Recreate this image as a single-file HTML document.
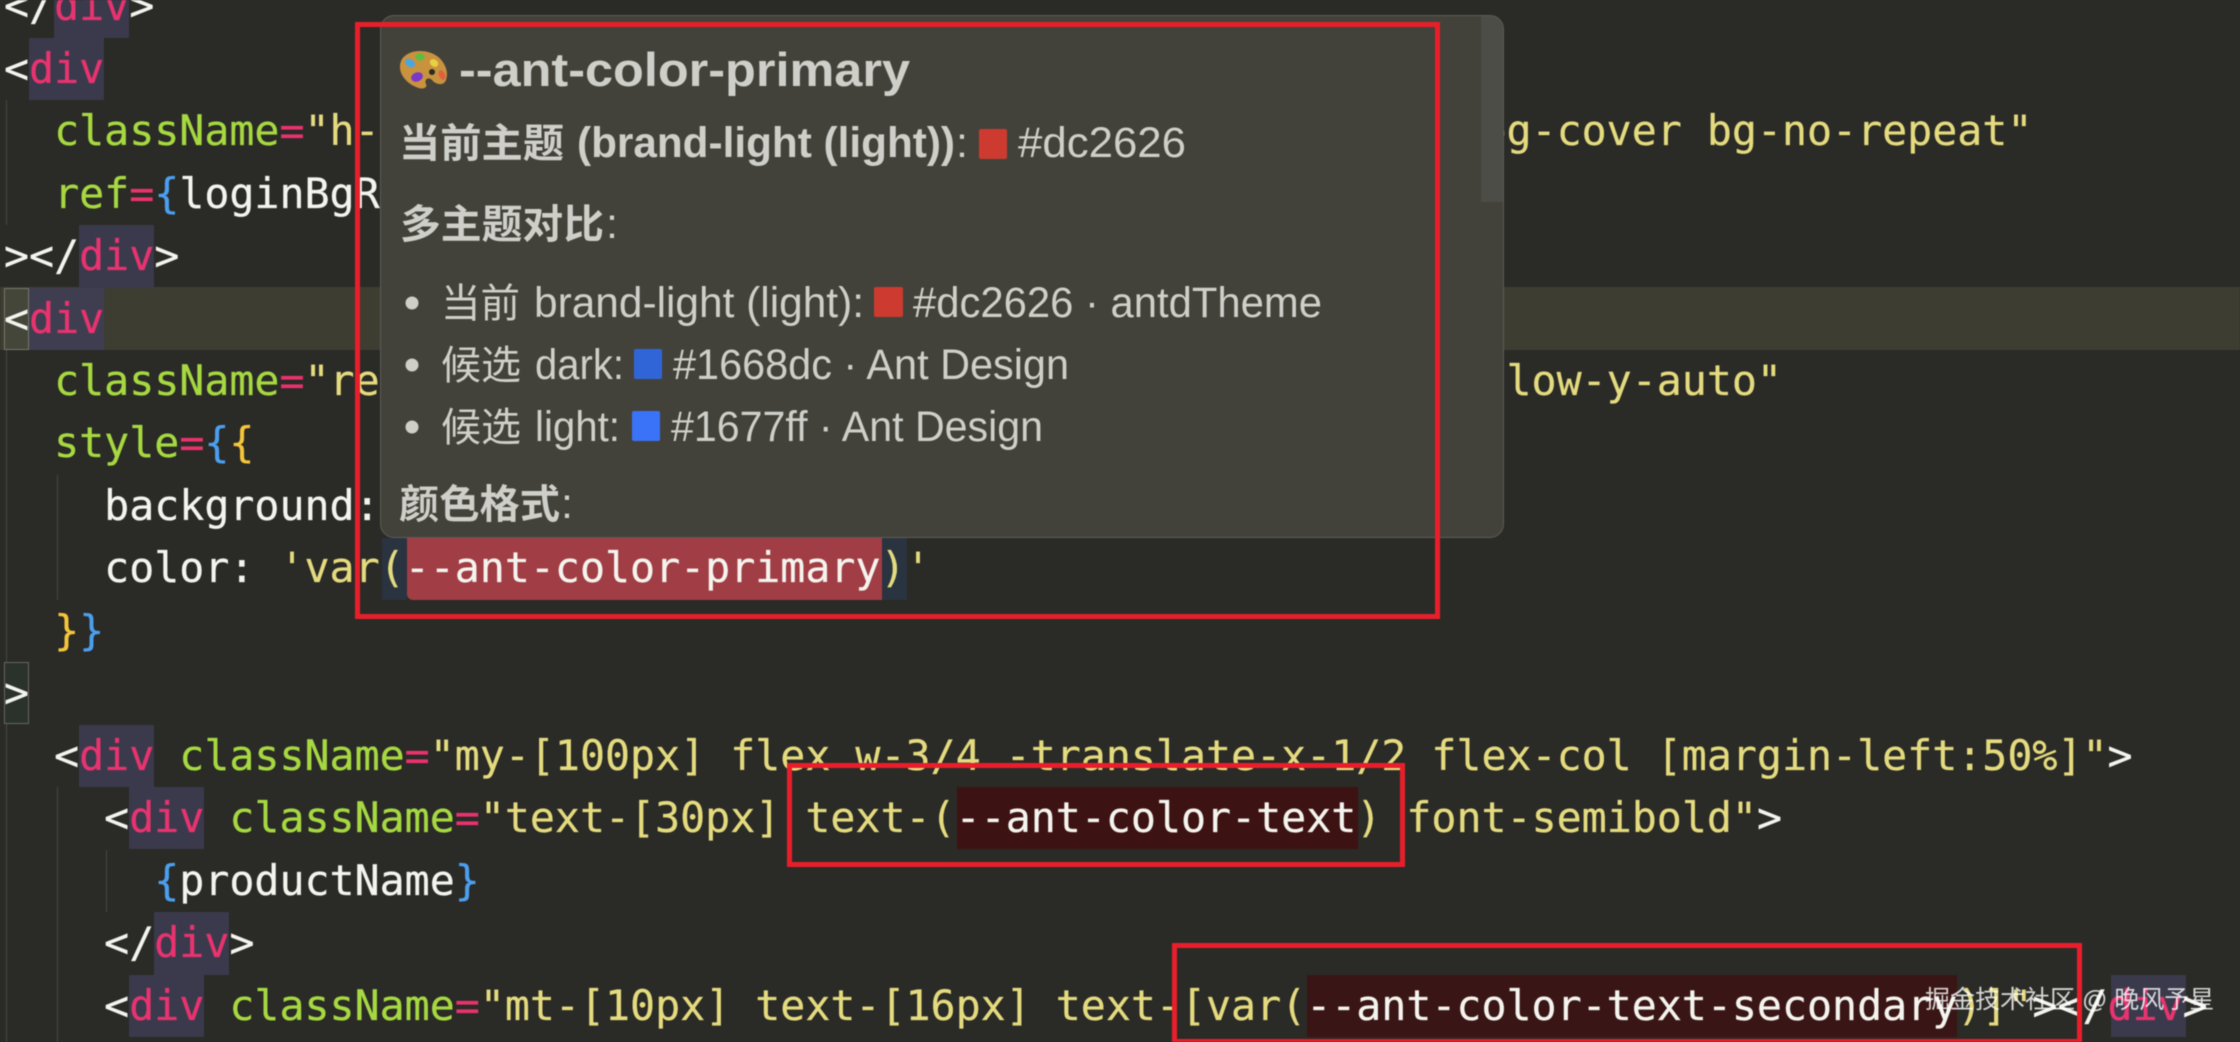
<!DOCTYPE html>
<html><head><meta charset="utf-8"><style>
html,body{margin:0;padding:0;background:#2a2a27;width:2240px;height:1042px;overflow:hidden}
#root{position:absolute;left:0;top:0;width:2240px;height:1042px;overflow:hidden;background:#2a2a27;filter:blur(.6px)}
.b{position:absolute}
.l{position:absolute;left:4px;height:62px;white-space:pre;font:41.6px/62px "DejaVu Sans Mono","Liberation Mono",monospace;color:#f4f4ee;-webkit-text-stroke:.3px currentColor}
.p{color:#e8336f}.g{color:#a6d841}.y{color:#e4da7e}.bl{color:#4b9fee}.o{color:#f4c53a}
svg{position:absolute;left:0;top:0}
svg text{font-family:"Liberation Sans","Noto Sans CJK SC",sans-serif;fill:#cfcfca}
</style></head><body><div id="root">
<div class="b" style="left:0;top:287px;width:2240px;height:63px;background:#3e3d32"></div>
<div class="b" style="left:54px;top:0;width:75px;height:38px;background:#3a3a4c"></div>
<div class="b" style="left:29px;top:38px;width:75px;height:62px;background:#3a3a4c"></div>
<div class="b" style="left:79px;top:225px;width:75px;height:63px;background:#3a3a4c"></div>
<div class="b" style="left:29px;top:288px;width:75px;height:62px;background:#3f3e50"></div>
<div class="b" style="left:79px;top:725px;width:75px;height:62px;background:#3a3a4c"></div>
<div class="b" style="left:129px;top:787px;width:75px;height:62px;background:#3a3a4c"></div>
<div class="b" style="left:154px;top:912px;width:75px;height:63px;background:#3a3a4c"></div>
<div class="b" style="left:129px;top:975px;width:75px;height:62px;background:#3a3a4c"></div>
<div class="b" style="left:2111px;top:975px;width:75px;height:62px;background:#3a3a4c"></div>
<div class="b" style="left:4px;top:288px;width:23px;height:60px;border:1px solid #77776a;background:#44463a"></div>
<div class="b" style="left:4px;top:662px;width:23px;height:60px;border:1px solid #66665e;background:#2a322b"></div>
<div class="b" style="left:6px;top:100px;width:1px;height:125px;background:#464642"></div>
<div class="b" style="left:6px;top:350px;width:1px;height:312px;background:#464642"></div>
<div class="b" style="left:6px;top:724px;width:1px;height:318px;background:#464642"></div>
<div class="b" style="left:57px;top:475px;width:1px;height:125px;background:#464642"></div>
<div class="b" style="left:57px;top:787px;width:1px;height:255px;background:#464642"></div>
<div class="b" style="left:106px;top:850px;width:1px;height:62px;background:#464642"></div>
<div class="b" style="left:382px;top:538px;width:25px;height:62px;background:#2a3340"></div>
<div class="b" style="left:882px;top:538px;width:25px;height:62px;background:#2a3340"></div>
<div class="b" style="left:407px;top:538px;width:475px;height:62px;background:#a13d44;border-radius:0 0 0 6px"></div>
<div class="b" style="left:957px;top:787px;width:401px;height:62px;background:#3d1212"></div>
<div class="b" style="left:1307px;top:975px;width:650px;height:62px;background:#3a1515"></div>

<div class="l" style="top:-25px">&lt;/<span class="p">div</span>&gt;</div>
<div class="l" style="top:38px">&lt;<span class="p">div</span></div>
<div class="l" style="top:100px">  <span class="g">className</span><span class="p">=</span><span class="y">"h-                                            bg-cover bg-no-repeat"</span></div>
<div class="l" style="top:163px">  <span class="g">ref</span><span class="p">=</span><span class="bl">{</span>loginBgRef<span class="bl">}</span></div>
<div class="l" style="top:225px">&gt;&lt;/<span class="p">div</span>&gt;</div>
<div class="l" style="top:288px">&lt;<span class="p">div</span></div>
<div class="l" style="top:350px">  <span class="g">className</span><span class="p">=</span><span class="y">"re                                            flow-y-auto"</span></div>
<div class="l" style="top:412px">  <span class="g">style</span><span class="p">=</span><span class="bl">{</span><span class="o">{</span></div>
<div class="l" style="top:475px">    background:</div>
<div class="l" style="top:537px">    color: <span class="y">'var(</span>--ant-color-primary<span class="y">)'</span></div>
<div class="l" style="top:600px">  <span class="o">}</span><span class="bl">}</span></div>
<div class="l" style="top:662px">&gt;</div>
<div class="l" style="top:725px">  &lt;<span class="p">div</span> <span class="g">className</span><span class="p">=</span><span class="y">"my-[100px] flex w-3/4 -translate-x-1/2 flex-col [margin-left:50%]"</span>&gt;</div>
<div class="l" style="top:787px">    &lt;<span class="p">div</span> <span class="g">className</span><span class="p">=</span><span class="y">"text-[30px] text-(</span>--ant-color-text<span class="y">) font-semibold"</span>&gt;</div>
<div class="l" style="top:850px">      <span class="bl">{</span>productName<span class="bl">}</span></div>
<div class="l" style="top:912px">    &lt;/<span class="p">div</span>&gt;</div>
<div class="l" style="top:975px">    &lt;<span class="p">div</span> <span class="g">className</span><span class="p">=</span><span class="y">"mt-[10px] text-[16px] text-[var(</span>--ant-color-text-secondary<span class="y">)]"</span>&gt;&lt;/<span class="p">div</span>&gt;</div>

<div class="b" style="left:380px;top:15px;width:1122px;height:521px;background:#42423a;border:1px solid #5c5c55;border-radius:14px;overflow:hidden">
  <div class="b" style="left:1100px;top:0;width:22px;height:186px;background:#4d4d47"></div>
</div>

<svg width="2240" height="1042" viewBox="0 0 2240 1042">
  <path d="M402 59 C408 50 425 48 437 56 C445 62 449 72 446 80 C444 86 436 85 432 80 C428 76 424 80 426 84 C428 88 422 90 416 87 C404 82 396 70 402 59 Z" fill="#c8923f"/>
  <ellipse cx="410" cy="63" rx="5.5" ry="3.8" fill="#4aa6e0" transform="rotate(35 410 63)"/>
  <ellipse cx="420" cy="57" rx="4.5" ry="3.5" fill="#58c040"/>
  <ellipse cx="434" cy="63" rx="4.5" ry="3.5" fill="#e8d040" transform="rotate(35 434 63)"/>
  <ellipse cx="417" cy="77" rx="6" ry="4.5" fill="#7a38c8" transform="rotate(-20 417 77)"/>
  <circle cx="432" cy="72" r="3" fill="#2a2a22"/>
  <ellipse cx="442" cy="75" rx="3" ry="5" fill="#e06040" transform="rotate(-25 442 75)"/>
  <text x="459" y="86" font-size="47" font-weight="700" textLength="451" lengthAdjust="spacingAndGlyphs">--ant-color-primary</text>

  <text x="399" y="157" font-size="40" font-weight="700" textLength="165" lengthAdjust="spacingAndGlyphs">当前主题</text>
  <text x="577" y="157" font-size="43" font-weight="700" textLength="378" lengthAdjust="spacingAndGlyphs">(brand-light (light))</text>
  <text x="956" y="157" font-size="43">:</text>
  <rect x="979" y="129" width="28" height="30" rx="2" fill="#cd3a30"/>
  <text x="1018" y="157" font-size="43" textLength="168" lengthAdjust="spacingAndGlyphs">#dc2626</text>

  <text x="400" y="238" font-size="40" font-weight="700" textLength="204" lengthAdjust="spacingAndGlyphs">多主题对比</text>
  <text x="606" y="238" font-size="43">:</text>

  <circle cx="412" cy="303" r="6.5" fill="#cfcfca"/>
  <text x="441" y="317" font-size="40" textLength="79" lengthAdjust="spacingAndGlyphs">当前</text>
  <text x="534" y="317" font-size="43" textLength="330" lengthAdjust="spacingAndGlyphs">brand-light (light):</text>
  <rect x="874" y="287" width="29" height="30" rx="2" fill="#cd3a30"/>
  <text x="913" y="317" font-size="43" textLength="409" lengthAdjust="spacingAndGlyphs">#dc2626 · antdTheme</text>

  <circle cx="412" cy="365" r="6.5" fill="#cfcfca"/>
  <text x="441" y="379" font-size="40" textLength="80" lengthAdjust="spacingAndGlyphs">候选</text>
  <text x="535" y="379" font-size="43" textLength="89" lengthAdjust="spacingAndGlyphs">dark:</text>
  <rect x="634" y="349" width="28" height="30" rx="2" fill="#3065d8"/>
  <text x="673" y="379" font-size="43" textLength="396" lengthAdjust="spacingAndGlyphs">#1668dc · Ant Design</text>

  <circle cx="412" cy="427" r="6.5" fill="#cfcfca"/>
  <text x="441" y="441" font-size="40" textLength="80" lengthAdjust="spacingAndGlyphs">候选</text>
  <text x="535" y="441" font-size="43" textLength="85" lengthAdjust="spacingAndGlyphs">light:</text>
  <rect x="632" y="411" width="28" height="30" rx="2" fill="#3a72f8"/>
  <text x="671" y="441" font-size="43" textLength="372" lengthAdjust="spacingAndGlyphs">#1677ff · Ant Design</text>

  <text x="399" y="518" font-size="40" font-weight="700" textLength="161" lengthAdjust="spacingAndGlyphs">颜色格式</text>
  <text x="561" y="518" font-size="43">:</text>
</svg>

<div class="b" style="box-sizing:border-box;left:355px;top:22px;width:1085px;height:597px;border:5px solid #e81f2a"></div>
<div class="b" style="box-sizing:border-box;left:787px;top:763px;width:618px;height:104px;border:5.5px solid #e81f2a"></div>
<div class="b" style="box-sizing:border-box;left:1172px;top:943px;width:910px;height:99px;border:5.5px solid #e81f2a;border-bottom-width:3px"></div>

<div class="b" style="left:1925px;top:984px;white-space:pre;color:rgba(255,255,255,.8);font:25px/32px 'Liberation Sans','Noto Sans CJK SC',sans-serif">掘金技术社区 @ 晚风予星</div>
</div></body></html>
